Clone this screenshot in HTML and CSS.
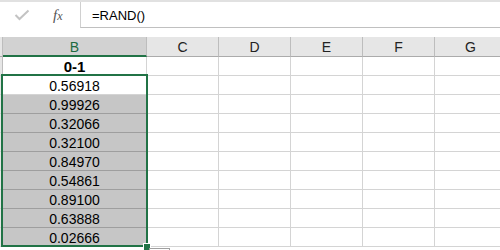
FILE: index.html
```html
<!DOCTYPE html>
<html>
<head>
    <title>RAND</title>
    <meta charset="utf-8">
    <link rel="stylesheet" href="styles.css">
</head>
<body>
    <div class="formula-bar">
        <div class="fb-buttons">
            <svg class="icon-check" width="16" height="12" viewBox="0 0 16 12">
                <polyline points="1.5,6 5.5,10 14.5,1.5" fill="none" stroke="#c3c3c3" stroke-width="2"/>
            </svg>
            <span class="icon-fx">f<span class="fx-x">x</span></span>
        </div>
        <div class="fb-input">=RAND()</div>
    </div>
    <div class="fb-gap"></div>

    <div class="sheet">
        <div class="col-head corner"></div>
        <div class="col-head active">B</div>
        <div class="col-head">C</div>
        <div class="col-head">D</div>
        <div class="col-head">E</div>
        <div class="col-head">F</div>
        <div class="col-head">G</div>

        <div class="row-strip"></div>
        <div class="cell title">0-1</div>
        <div class="cell"></div><div class="cell"></div><div class="cell"></div><div class="cell"></div><div class="cell"></div>

        <div class="row-strip"></div>
        <div class="cell num current">0.56918</div>
        <div class="cell"></div><div class="cell"></div><div class="cell"></div><div class="cell"></div><div class="cell"></div>

        <div class="row-strip"></div>
        <div class="cell num sel">0.99926</div>
        <div class="cell"></div><div class="cell"></div><div class="cell"></div><div class="cell"></div><div class="cell"></div>

        <div class="row-strip"></div>
        <div class="cell num sel">0.32066</div>
        <div class="cell"></div><div class="cell"></div><div class="cell"></div><div class="cell"></div><div class="cell"></div>

        <div class="row-strip"></div>
        <div class="cell num sel">0.32100</div>
        <div class="cell"></div><div class="cell"></div><div class="cell"></div><div class="cell"></div><div class="cell"></div>

        <div class="row-strip"></div>
        <div class="cell num sel">0.84970</div>
        <div class="cell"></div><div class="cell"></div><div class="cell"></div><div class="cell"></div><div class="cell"></div>

        <div class="row-strip"></div>
        <div class="cell num sel">0.54861</div>
        <div class="cell"></div><div class="cell"></div><div class="cell"></div><div class="cell"></div><div class="cell"></div>

        <div class="row-strip"></div>
        <div class="cell num sel">0.89100</div>
        <div class="cell"></div><div class="cell"></div><div class="cell"></div><div class="cell"></div><div class="cell"></div>

        <div class="row-strip"></div>
        <div class="cell num sel">0.63888</div>
        <div class="cell"></div><div class="cell"></div><div class="cell"></div><div class="cell"></div><div class="cell"></div>

        <div class="row-strip"></div>
        <div class="cell num sel">0.02666</div>
        <div class="cell"></div><div class="cell"></div><div class="cell"></div><div class="cell"></div><div class="cell"></div>

        <!-- selection outline over B2:B10 -->
        <div class="selection"></div>
        <div class="fill-handle"></div>
        <div class="quick-btn"></div>
    </div>
</body>
</html>
```

FILE: styles.css
```css
body {
    margin: 0;
    width: 500px;
    height: 250px;
    overflow: hidden;
    background-color: #ffffff;
    font-family: "Liberation Sans", Arial, sans-serif;
}
.formula-bar {
    display: flex;
    height: 28px;
    background-color: #ffffff;
    border-top: 2px solid #e1e1e1;
    box-sizing: border-box;
}
.fb-buttons {
    width: 78px;
    display: flex;
    align-items: center;
    padding-left: 14px;
    box-sizing: border-box;
}
.icon-check {
    margin-right: 23px;
}
.icon-fx {
    font-family: "Liberation Serif", serif;
    font-style: italic;
    font-size: 15px;
    color: #555555;
}
.fx-x {
    font-size: 12px;
}
.fb-input {
    flex: 1;
    margin-left: 2px;
    border-left: 1px solid #d0d0d0;
    border-bottom: 1px solid #c0c0c0;
    padding-left: 11px;
    padding-top: 2px;
    font-size: 13px;
    line-height: 23px;
    color: #000000;
}
.fb-gap {
    height: 9px;
    background-color: #ffffff;
}
.sheet {
    position: relative;
    display: grid;
    grid-template-columns: 3px 144px 72px 72px 72px 72px 72px;
    grid-template-rows: 20px;
    grid-auto-rows: 19px;
    height: 213px;
    overflow: hidden;
}
.col-head {
    background-color: #e6e6e6;
    border-right: 1px solid #bdbdbd;
    border-bottom: 1px solid #ababab;
    box-sizing: border-box;
    text-align: center;
    font-size: 14px;
    padding-top: 2px;
    line-height: 17px;
    color: #222222;
}
.col-head.active {
    background-color: #d2d2d2;
    border-bottom: 2px solid #217346;
    color: #1e6b41;
}
.row-strip {
    background-color: #e6e6e6;
    border-right: 1px solid #bdbdbd;
    border-bottom: 1px solid #d4d4d4;
    box-sizing: border-box;
}
.cell {
    border-right: 1px solid #d4d4d4;
    border-bottom: 1px solid #d4d4d4;
    box-sizing: border-box;
    text-align: center;
    font-size: 14px;
    line-height: 19px;
    color: #000000;
}
.cell.title {
    font-weight: bold;
    font-size: 15px;
    padding-top: 1px;
    line-height: 17px;
}
.cell.num {
    padding-top: 3px;
    line-height: 15px;
}
.cell.sel {
    background-color: #c6c6c6;
    border-bottom-color: #9e9e9e;
    border-right-color: #9e9e9e;
}
.selection {
    position: absolute;
    left: 1px;
    top: 37px;
    width: 147px;
    height: 173px;
    border: 2px solid #217346;
    box-sizing: border-box;
}
.fill-handle {
    position: absolute;
    left: 143px;
    top: 206px;
    width: 6px;
    height: 6px;
    background-color: #217346;
    border: 1px solid #ffffff;
}
.quick-btn {
    position: absolute;
    left: 149px;
    top: 211px;
    width: 19px;
    height: 10px;
    border-top: 1px solid #a0a0a0;
    border-left: 1px solid #a0a0a0;
    border-right: 1px solid #a0a0a0;
    background-color: #ffffff;
}
```
